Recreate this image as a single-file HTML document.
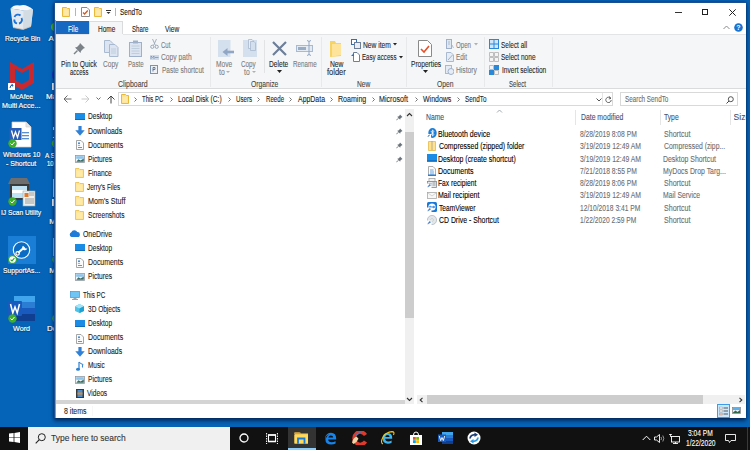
<!DOCTYPE html>
<html><head><meta charset="utf-8"><style>
html,body{margin:0;padding:0}
body{width:750px;height:450px;overflow:hidden;position:relative;background:#0664b8;font-family:"Liberation Sans",sans-serif}
.t{position:absolute;white-space:nowrap;line-height:10px;transform-origin:0 0}
.r{position:absolute}
</style></head><body>
<svg class="r" style="left:8px;top:3px;" width="28" height="29" viewBox="0 0 28 29">
<path d="M2.5 5.5 L15.5 7.5 L25 6.5 L23 23.5 L15 26.5 L5 24.5 Z" fill="#e4eaf0"/>
<path d="M15.5 7.5 L25 6.5 L23 23.5 L15 26.5 Z" fill="#d3dbe3"/>
<path d="M2.5 5.5 Q6 1 12 2.5 Q18 0.5 25 6.5 L15.5 7.5 Z" fill="#f6f8fa"/>
<path d="M5 24.5 L15 26.5 L23 23.5" stroke="#c9b9a8" stroke-width="0.8" fill="none"/>
<path d="M6.5 14 A3.8 3.8 0 0 1 12.5 12.5" stroke="#1d72d8" stroke-width="1.8" fill="none"/>
<path d="M13.5 15 A3.8 3.8 0 0 1 11 20.5" stroke="#1d72d8" stroke-width="1.8" fill="none"/>
<path d="M9 20.5 A3.8 3.8 0 0 1 6.3 16.5" stroke="#1d72d8" stroke-width="1.8" fill="none"/>
</svg>
<div class="t" style="left:4.65px;top:34px;font-size:8px;color:#ffffff;transform:scaleX(0.836);text-shadow:0 0 1.5px rgba(0,0,0,.45),0 1px 1px rgba(0,0,0,.35);-webkit-text-stroke:0.2px #ffffff;">Recycle Bin</div>
<svg class="r" style="left:51px;top:23px;" width="4" height="8" viewBox="0 0 4 8"><circle cx="4" cy="4" r="4" fill="#3fae2a"/></svg>
<div class="t" style="left:48.56px;top:34px;font-size:8px;color:#ffffff;text-shadow:0 0 1.5px rgba(0,0,0,.45),0 1px 1px rgba(0,0,0,.35);-webkit-text-stroke:0.2px #ffffff;">Ar</div>
<svg class="r" style="left:9px;top:61px;" width="26" height="30" viewBox="0 0 26 30">
<path d="M1 1 L13 8 L25 1 L25 22 L13 29 L1 22 Z" fill="#c8282e"/>
<path d="M6 8 L13 12 L20 8 L20 19 L13 23 L6 19 Z" fill="#0664b8"/>
</svg>
<svg class="r" style="left:8px;top:83px;" width="7" height="7" viewBox="0 0 7 7"><rect width="7" height="7" fill="#fff"/><path d="M2 5 Q2 2 5 2 M3.5 1.5 L5 2 L4.5 3.5" stroke="#1a5fb4" fill="none" stroke-width="1"/></svg>
<div class="t" style="left:9.57px;top:92px;font-size:8px;color:#ffffff;transform:scaleX(0.853);text-shadow:0 0 1.5px rgba(0,0,0,.45),0 1px 1px rgba(0,0,0,.35);-webkit-text-stroke:0.2px #ffffff;">McAfee</div>
<div class="t" style="left:2.10px;top:101px;font-size:8px;color:#ffffff;transform:scaleX(0.890);text-shadow:0 0 1.5px rgba(0,0,0,.45),0 1px 1px rgba(0,0,0,.35);-webkit-text-stroke:0.2px #ffffff;">Multi Acce...</div>
<svg class="r" style="left:51px;top:66px;" width="4" height="18" viewBox="0 0 4 18"><circle cx="10" cy="9" r="9" fill="#1c34c4"/></svg>
<svg class="r" style="left:52px;top:83px;" width="3" height="7" viewBox="0 0 3 7"><rect width="3" height="7" fill="#fff"/></svg>
<div class="t" style="left:46.00px;top:92px;font-size:8px;color:#ffffff;text-shadow:0 0 1.5px rgba(0,0,0,.45),0 1px 1px rgba(0,0,0,.35);-webkit-text-stroke:0.2px #ffffff;">Ma</div>
<svg class="r" style="left:9px;top:121px;" width="24" height="28" viewBox="0 0 24 28">
<path d="M3 1 L17 1 L22 6 L22 26 L3 26 Z" fill="#fff" stroke="#d0d0d0" stroke-width="0.7"/>
<path d="M17 1 L17 6 L22 6" fill="#e6e6e6" stroke="#d0d0d0" stroke-width="0.7"/>
<rect x="13" y="11" width="7" height="1.3" fill="#5a8fd0"/><rect x="13" y="14" width="7" height="1.3" fill="#5a8fd0"/><rect x="13" y="17" width="7" height="1.3" fill="#5a8fd0"/>
<rect x="0.5" y="7" width="12" height="12" fill="#2b5fb8"/>
<path d="M2.5 9.5 L4.5 16.5 L6.5 11 L8.5 16.5 L10.5 9.5" stroke="#fff" stroke-width="1.3" fill="none"/>
</svg>
<svg class="r" style="left:8px;top:139px;" width="9" height="9" viewBox="0 0 9 9"><circle cx="4.5" cy="4.5" r="4.2" fill="#3fae2a"/><path d="M2.5 4.5 L4 6 L6.5 3" stroke="#fff" stroke-width="1" fill="none"/></svg>
<div class="t" style="left:2.97px;top:150px;font-size:8px;color:#ffffff;transform:scaleX(0.856);text-shadow:0 0 1.5px rgba(0,0,0,.45),0 1px 1px rgba(0,0,0,.35);-webkit-text-stroke:0.2px #ffffff;">Windows 10</div>
<div class="t" style="left:6.23px;top:159px;font-size:8px;color:#ffffff;transform:scaleX(0.874);text-shadow:0 0 1.5px rgba(0,0,0,.45),0 1px 1px rgba(0,0,0,.35);-webkit-text-stroke:0.2px #ffffff;">- Shortcut</div>
<svg class="r" style="left:53px;top:127px;" width="2" height="11" viewBox="0 0 2 11"><rect width="2" height="11" fill="#f4f4f4"/><rect x="0" y="3" width="2" height="7" fill="#2b5fb8"/></svg>
<svg class="r" style="left:51px;top:139px;" width="5" height="9" viewBox="0 0 5 9"><circle cx="5" cy="4.5" r="4.2" fill="#3fae2a"/></svg>
<div class="t" style="left:44.99px;top:151px;font-size:8px;color:#ffffff;transform:scaleX(0.799);text-shadow:0 0 1.5px rgba(0,0,0,.45),0 1px 1px rgba(0,0,0,.35);-webkit-text-stroke:0.2px #ffffff;">A S</div>
<div class="t" style="left:47.07px;top:159px;font-size:8px;color:#ffffff;transform:scaleX(0.743);text-shadow:0 0 1.5px rgba(0,0,0,.45),0 1px 1px rgba(0,0,0,.35);-webkit-text-stroke:0.2px #ffffff;">10</div>
<svg class="r" style="left:7px;top:178px;" width="30" height="30" viewBox="0 0 30 30">
<path d="M1 6 L4 0 L20 0 L23 6 Z" fill="#6e6e6e"/>
<rect x="3" y="6" width="19" height="16" fill="#3a3a3a"/>
<rect x="5" y="8" width="15" height="12" fill="#bfe3f5"/>
<rect x="5" y="12" width="15" height="3" fill="#ffffff"/>
<rect x="16" y="13" width="12" height="15" fill="#eef0f0" stroke="#9aa" stroke-width="0.6"/>
<rect x="17.5" y="15" width="4" height="4" fill="#e07a2a"/>
<path d="M22 15 h5 M22 17 h5 M18 21 h9 M18 23 h9 M18 25 h9" stroke="#888" stroke-width="0.8"/>
</svg>
<svg class="r" style="left:8px;top:197px;" width="9" height="9" viewBox="0 0 9 9"><circle cx="4.5" cy="4.5" r="4.2" fill="#3fae2a"/><path d="M2.5 4.5 L4 6 L6.5 3" stroke="#fff" stroke-width="1" fill="none"/></svg>
<div class="t" style="left:1.22px;top:208px;font-size:8px;color:#ffffff;transform:scaleX(0.829);text-shadow:0 0 1.5px rgba(0,0,0,.45),0 1px 1px rgba(0,0,0,.35);-webkit-text-stroke:0.2px #ffffff;">IJ Scan Utility</div>
<svg class="r" style="left:52px;top:199px;" width="3" height="7" viewBox="0 0 3 7"><rect width="3" height="7" fill="#fff"/></svg>
<svg class="r" style="left:53px;top:179px;" width="2" height="18" viewBox="0 0 2 18"><rect width="2" height="18" fill="#f2efe6"/></svg>
<div class="t" style="left:49.34px;top:217px;font-size:8px;color:#ffffff;text-shadow:0 0 1.5px rgba(0,0,0,.45),0 1px 1px rgba(0,0,0,.35);-webkit-text-stroke:0.2px #ffffff;">M</div>
<div class="r" style="left:8px;top:236px;width:28px;height:28px;background:#1a7dd6;"></div>
<svg class="r" style="left:12px;top:240px;" width="19" height="20" viewBox="0 0 19 20">
<circle cx="9.5" cy="10" r="8.2" fill="#0a6cc4" stroke="#fff" stroke-width="1.1"/>
<path d="M6.2 12.8 L12.2 7.4" stroke="#fff" stroke-width="2"/>
<circle cx="5.6" cy="13.4" r="1.7" fill="none" stroke="#fff" stroke-width="1.2"/>
<path d="M11 5.8 A2.6 2.6 0 1 0 15.3 8.4 L13.6 8.6 L12.6 7.2 Z" fill="#fff"/>
</svg>
<svg class="r" style="left:8px;top:255px;" width="9" height="9" viewBox="0 0 9 9"><circle cx="4.5" cy="4.5" r="3.9" fill="#fff" stroke="#2aa12a" stroke-width="1.1"/><path d="M2.6 4.6 L4 5.9 L6.4 3.2" stroke="#2aa12a" stroke-width="1.1" fill="none"/></svg>
<div class="t" style="left:2.69px;top:266px;font-size:8px;color:#ffffff;transform:scaleX(0.843);text-shadow:0 0 1.5px rgba(0,0,0,.45),0 1px 1px rgba(0,0,0,.35);-webkit-text-stroke:0.2px #ffffff;">SupportAs...</div>
<svg class="r" style="left:53px;top:238px;" width="2" height="18" viewBox="0 0 2 18"><rect width="2" height="18" fill="#c8c8c8"/></svg>
<svg class="r" style="left:52px;top:255px;" width="3" height="9" viewBox="0 0 3 9"><circle cx="4.5" cy="4.5" r="4.2" fill="#3fae2a"/></svg>
<div class="t" style="left:49.34px;top:266px;font-size:8px;color:#ffffff;text-shadow:0 0 1.5px rgba(0,0,0,.45),0 1px 1px rgba(0,0,0,.35);-webkit-text-stroke:0.2px #ffffff;">M</div>
<svg class="r" style="left:8px;top:296px;" width="28" height="26" viewBox="0 0 28 26">
<rect x="6" y="0" width="21" height="6" fill="#41a5ee"/>
<rect x="6" y="6" width="21" height="6" fill="#2b7cd3"/>
<rect x="6" y="12" width="21" height="6" fill="#185abd"/>
<rect x="6" y="18" width="21" height="7" fill="#103f91"/>
<rect x="0" y="5" width="14" height="15" rx="1" fill="#185abd"/>
<path d="M2.5 8 L4.8 17 L7 11 L9.2 17 L11.5 8" stroke="#fff" stroke-width="1.5" fill="none"/>
</svg>
<svg class="r" style="left:8px;top:314px;" width="9" height="9" viewBox="0 0 9 9"><circle cx="4.5" cy="4.5" r="4.2" fill="#3fae2a"/><path d="M2.5 4.5 L4 6 L6.5 3" stroke="#fff" stroke-width="1" fill="none"/></svg>
<div class="t" style="left:13.31px;top:324px;font-size:8px;color:#ffffff;transform:scaleX(0.899);text-shadow:0 0 1.5px rgba(0,0,0,.45),0 1px 1px rgba(0,0,0,.35);-webkit-text-stroke:0.2px #ffffff;">Word</div>
<svg class="r" style="left:52px;top:314px;" width="3" height="9" viewBox="0 0 3 9"><circle cx="4.5" cy="4.5" r="4.2" fill="#3fae2a"/></svg>
<div class="t" style="left:47.00px;top:324px;font-size:8px;color:#ffffff;text-shadow:0 0 1.5px rgba(0,0,0,.45),0 1px 1px rgba(0,0,0,.35);-webkit-text-stroke:0.2px #ffffff;">Do</div>
<div class="r" style="left:54px;top:2px;width:692px;height:416px;background:#1b4f8f;box-shadow:0 3px 4px rgba(0,10,40,.55),0 0 3px rgba(0,10,40,.45)"></div>
<div class="r" style="left:55px;top:3px;width:691px;height:415px;background:#ffffff;"></div>
<svg class="r" style="left:62px;top:7px;" width="8" height="10" viewBox="0 0 8 10"><path d="M0.5 0.5 H4.5 L5.5 1.5 H7.5 V9.5 H0.5 Z" fill="#ffe18f" stroke="#e9b93a" stroke-width="1"/><rect x="1.5" y="2.5" width="5" height="6" fill="#ffe9a8"/></svg>
<div class="r" style="left:75px;top:8px;width:1px;height:8px;background:#b5b5b5;"></div>
<svg class="r" style="left:81px;top:7px;" width="9" height="10" viewBox="0 0 9 10"><path d="M0.5 0.5 H6 L8.5 3 V9.5 H0.5 Z" fill="#fff" stroke="#8a8a8a" stroke-width="1"/><path d="M2 5.5 L3.6 7 L6.8 3.5" stroke="#e2531c" stroke-width="1.3" fill="none"/></svg>
<svg class="r" style="left:94px;top:7px;" width="8" height="10" viewBox="0 0 8 10"><path d="M0.5 0.5 H4.5 L5.5 1.5 H7.5 V9.5 H0.5 Z" fill="#ffe18f" stroke="#e9b93a" stroke-width="1"/><rect x="1.5" y="2.5" width="5" height="6" fill="#ffe9a8"/></svg>
<svg class="r" style="left:106px;top:10px;" width="5" height="5" viewBox="0 0 5 5"><rect x="0" y="0" width="5" height="1" fill="#333"/><path d="M0.5 2 H4.5 L2.5 4 Z" fill="#333"/></svg>
<div class="r" style="left:115px;top:8px;width:1px;height:8px;background:#b5b5b5;"></div>
<div class="t" style="left:119.71px;top:7px;font-size:8.5px;color:#111;transform:scaleX(0.760);-webkit-text-stroke:0.1px #111;">SendTo</div>
<div class="r" style="left:675px;top:12px;width:7px;height:1px;background:#333;"></div>
<div class="r" style="left:702px;top:9px;width:6px;height:6px;background:transparent;border:1px solid #222;box-sizing:border-box"></div>
<svg class="r" style="left:729px;top:9px;" width="7" height="7" viewBox="0 0 7 7"><path d="M0.3 0.3 L6.7 6.7 M6.7 0.3 L0.3 6.7" stroke="#222" stroke-width="1"/></svg>
<div class="r" style="left:56px;top:21px;width:33px;height:13px;background:#1668c0;"></div>
<div class="t" style="left:67.95px;top:24px;font-size:8.5px;color:#fff;transform:scaleX(0.741);-webkit-text-stroke:0.1px #fff;">File</div>
<div class="r" style="left:89px;top:21px;width:34px;height:14px;background:#f5f6f7;border:1px solid #dadbdc;border-bottom:none;box-sizing:border-box"></div>
<div class="t" style="left:97.75px;top:24px;font-size:8.5px;color:#222;transform:scaleX(0.762);-webkit-text-stroke:0.1px #222;">Home</div>
<div class="t" style="left:131.61px;top:24px;font-size:8.5px;color:#222;transform:scaleX(0.723);-webkit-text-stroke:0.1px #222;">Share</div>
<div class="t" style="left:165.47px;top:24px;font-size:8.5px;color:#222;transform:scaleX(0.774);-webkit-text-stroke:0.1px #222;">View</div>
<svg class="r" style="left:723px;top:25px;" width="7" height="5" viewBox="0 0 7 5"><path d="M0.5 4 L3.5 1 L6.5 4" stroke="#8a8a8a" fill="none" stroke-width="1"/></svg>
<svg class="r" style="left:734px;top:23px;" width="9" height="9" viewBox="0 0 9 9"><circle cx="4.5" cy="4.5" r="4.3" fill="#1a73d0"/><text x="4.5" y="7.4" font-size="7" font-weight="bold" text-anchor="middle" fill="#fff" font-family="Liberation Sans">?</text></svg>
<div class="r" style="left:55px;top:34px;width:691px;height:55px;background:#f5f6f7;"></div>
<div class="r" style="left:55px;top:34px;width:34px;height:1px;background:#e3e4e5;"></div>
<div class="r" style="left:123px;top:34px;width:623px;height:1px;background:#e3e4e5;"></div>
<div class="r" style="left:55px;top:88px;width:691px;height:1px;background:#dadbdc;"></div>
<div class="r" style="left:210px;top:37px;width:1px;height:50px;background:#e8e9ea;"></div>
<div class="r" style="left:321px;top:37px;width:1px;height:50px;background:#e8e9ea;"></div>
<div class="r" style="left:406px;top:37px;width:1px;height:50px;background:#e8e9ea;"></div>
<div class="r" style="left:484px;top:37px;width:1px;height:50px;background:#e8e9ea;"></div>
<div class="r" style="left:552px;top:37px;width:1px;height:50px;background:#e8e9ea;"></div>
<svg class="r" style="left:73px;top:42px;" width="13" height="13" viewBox="0 0 13 13"><path d="M7 1 L12 6 L10.5 6.5 L8 9 L7.5 11 L2 5.5 L4 5 L6.5 2.5 Z" fill="#7b8288"/><path d="M4.5 8.5 L1 12" stroke="#7b8288" stroke-width="1.4"/></svg>
<div class="t" style="left:61.14px;top:59px;font-size:8.5px;color:#262626;transform:scaleX(0.782);-webkit-text-stroke:0.1px #262626;">Pin to Quick</div>
<div class="t" style="left:69.86px;top:67px;font-size:8.5px;color:#262626;transform:scaleX(0.694);-webkit-text-stroke:0.1px #262626;">access</div>
<svg class="r" style="left:104px;top:40px;" width="15" height="17" viewBox="0 0 15 17"><path d="M0.5 0.5 H6 L9 3.5 V12.5 H0.5 Z" fill="#dbe4f0" stroke="#a9b9cf"/><path d="M5.5 4.5 H11 L14 7.5 V16.5 H5.5 Z" fill="#dbe4f0" stroke="#a9b9cf"/><path d="M7 9 H12 M7 11 H12 M7 13 H12" stroke="#b8c6d8" stroke-width="0.8"/></svg>
<div class="t" style="left:102.66px;top:59px;font-size:8.5px;color:#7c7c7c;transform:scaleX(0.773);-webkit-text-stroke:0.1px #7c7c7c;">Copy</div>
<svg class="r" style="left:129px;top:40px;" width="13" height="17" viewBox="0 0 13 17"><rect x="0.5" y="2.5" width="12" height="14" fill="#dbe4f0" stroke="#9fb1ca"/><rect x="4" y="0.5" width="5" height="3" fill="#9fb1ca"/><path d="M2.5 6 H10.5 M2.5 8.5 H10.5 M2.5 11 H10.5 M2.5 13.5 H10.5" stroke="#b8c6d8" stroke-width="0.8"/></svg>
<div class="t" style="left:127.59px;top:59px;font-size:8.5px;color:#7c7c7c;transform:scaleX(0.719);-webkit-text-stroke:0.1px #7c7c7c;">Paste</div>
<svg class="r" style="left:150px;top:39px;" width="9" height="10" viewBox="0 0 9 10"><path d="M2.5 0 L5.5 6.5 M6.5 0 L3.5 6.5" stroke="#9aa8b8" stroke-width="0.9"/><circle cx="2.3" cy="7.8" r="1.6" fill="none" stroke="#9aa8b8"/><circle cx="6.7" cy="7.8" r="1.6" fill="none" stroke="#9aa8b8"/></svg>
<div class="t" style="left:161.48px;top:40px;font-size:8.5px;color:#7c7c7c;transform:scaleX(0.705);-webkit-text-stroke:0.1px #7c7c7c;">Cut</div>
<svg class="r" style="left:150px;top:55px;" width="9" height="5" viewBox="0 0 9 5"><rect x="0" y="0" width="9" height="5" fill="#cdd9e8"/><path d="M1 1 V4 M1 1 L2.5 2.5 L4 1 V4 M5 2.5 H8.5" stroke="#7d92ad" stroke-width="0.8" fill="none"/></svg>
<div class="t" style="left:161.19px;top:52px;font-size:8.5px;color:#7c7c7c;transform:scaleX(0.790);-webkit-text-stroke:0.1px #7c7c7c;">Copy path</div>
<svg class="r" style="left:150px;top:65px;" width="8" height="9" viewBox="0 0 8 9"><rect x="0.5" y="0.5" width="7" height="8" fill="#eef2f7" stroke="#7d92ad"/><path d="M3 6.5 V2.5 H5 V4.5 H3" stroke="#4a6388" stroke-width="0.8" fill="none"/></svg>
<div class="t" style="left:161.69px;top:65px;font-size:8.5px;color:#7c7c7c;transform:scaleX(0.770);-webkit-text-stroke:0.1px #7c7c7c;">Paste shortcut</div>
<div class="t" style="left:117.72px;top:79px;font-size:8.5px;color:#444;transform:scaleX(0.817);-webkit-text-stroke:0.1px #444;">Clipboard</div>
<svg class="r" style="left:218px;top:40px;" width="17" height="17" viewBox="0 0 17 17"><rect x="0" y="0" width="12.5" height="17" fill="#d5e0ee"/><path d="M16 12 H9" stroke="#8fa6c4" stroke-width="2.6"/><path d="M4.5 12 L9.5 8 V16 Z" fill="#8fa6c4"/></svg>
<div class="t" style="left:216.04px;top:59px;font-size:8.5px;color:#7c7c7c;transform:scaleX(0.781);-webkit-text-stroke:0.1px #7c7c7c;">Move</div>
<div class="t" style="left:218.89px;top:67px;font-size:8.5px;color:#7c7c7c;transform:scaleX(0.795);-webkit-text-stroke:0.1px #7c7c7c;">to</div>
<svg class="r" style="left:226px;top:71px;" width="4" height="3" viewBox="0 0 4 3"><path d="M0 0 H4 L2 2 Z" fill="#b0b0b0"/></svg>
<svg class="r" style="left:243px;top:39px;" width="15" height="18" viewBox="0 0 15 18"><rect x="0" y="1" width="14" height="17" fill="#d5e0ee"/><path d="M5.5 0.5 H9 L10.5 2 V9.5 H5.5 Z" fill="#e8eef6" stroke="#a9b9cf" stroke-width="0.8"/><path d="M7.5 2.5 H11 L12.5 4 V11.5 H7.5 Z" fill="#d5e0ee" stroke="#a9b9cf" stroke-width="0.8"/></svg>
<div class="t" style="left:241.17px;top:59px;font-size:8.5px;color:#7c7c7c;transform:scaleX(0.739);-webkit-text-stroke:0.1px #7c7c7c;">Copy</div>
<div class="t" style="left:244.39px;top:67px;font-size:8.5px;color:#7c7c7c;transform:scaleX(0.795);-webkit-text-stroke:0.1px #7c7c7c;">to</div>
<svg class="r" style="left:252px;top:71px;" width="4" height="3" viewBox="0 0 4 3"><path d="M0 0 H4 L2 2 Z" fill="#b0b0b0"/></svg>
<div class="r" style="left:264px;top:40px;width:1px;height:33px;background:#e2e3e4;"></div>
<svg class="r" style="left:272px;top:41px;" width="15" height="15" viewBox="0 0 15 15"><path d="M1 1 L14 14 M14 1 L1 14" stroke="#6c7f99" stroke-width="2.2"/></svg>
<div class="t" style="left:269.13px;top:59px;font-size:8.5px;color:#262626;transform:scaleX(0.780);-webkit-text-stroke:0.1px #262626;">Delete</div>
<svg class="r" style="left:277px;top:70px;" width="5" height="3" viewBox="0 0 5 3"><path d="M0 0 H5 L2.5 3 Z" fill="#222"/></svg>
<svg class="r" style="left:296px;top:40px;" width="18" height="16" viewBox="0 0 18 16"><rect x="0.5" y="5.5" width="16" height="6" fill="#e4eaf2" stroke="#a9b9cf"/><rect x="2" y="7" width="8" height="3" fill="#98acc6"/><path d="M11 0.6 Q13 0.6 13 2 V14 Q13 15.4 11 15.4 M15 0.6 Q13 0.6 13 2 M13 14 Q13 15.4 15 15.4" stroke="#8fa6c4" stroke-width="1" fill="none"/></svg>
<div class="t" style="left:292.59px;top:59px;font-size:8.5px;color:#7c7c7c;transform:scaleX(0.738);-webkit-text-stroke:0.1px #7c7c7c;">Rename</div>
<div class="t" style="left:251.30px;top:79px;font-size:8.5px;color:#444;transform:scaleX(0.793);-webkit-text-stroke:0.1px #444;">Organize</div>
<svg class="r" style="left:330px;top:41px;" width="12" height="16" viewBox="0 0 12 16"><path d="M0 0 H5 L6 2 H11 V15 L0 16 Z" fill="#f6d365"/><path d="M2 3 H11 V14 L2 15.5 Z" fill="#fde49a"/></svg>
<div class="t" style="left:330.11px;top:59px;font-size:8.5px;color:#262626;transform:scaleX(0.792);-webkit-text-stroke:0.1px #262626;">New</div>
<div class="t" style="left:327.47px;top:67px;font-size:8.5px;color:#262626;transform:scaleX(0.882);-webkit-text-stroke:0.1px #262626;">folder</div>
<svg class="r" style="left:351px;top:39px;" width="10" height="10" viewBox="0 0 10 10"><rect x="0.5" y="0.5" width="5" height="5" fill="#fff" stroke="#2e6fc0"/><rect x="3.5" y="3.5" width="6" height="6" fill="#e8eef6" stroke="#6f7f95"/></svg>
<div class="t" style="left:362.57px;top:40px;font-size:8.5px;color:#262626;transform:scaleX(0.787);-webkit-text-stroke:0.1px #262626;">New item</div>
<svg class="r" style="left:393px;top:43px;" width="4" height="3" viewBox="0 0 4 3"><path d="M0 0 H4 L2 2.5 Z" fill="#222"/></svg>
<svg class="r" style="left:351px;top:52px;" width="9" height="10" viewBox="0 0 9 10"><path d="M2.5 0.5 H6 L8.5 3 V9.5 H2.5 Z" fill="#fff" stroke="#6f7f95"/><path d="M0 4 L3 1 V4 Z" fill="#2e6fc0"/></svg>
<div class="t" style="left:362.06px;top:52px;font-size:8.5px;color:#262626;transform:scaleX(0.723);-webkit-text-stroke:0.1px #262626;">Easy access</div>
<svg class="r" style="left:399px;top:56px;" width="4" height="3" viewBox="0 0 4 3"><path d="M0 0 H4 L2 2.5 Z" fill="#222"/></svg>
<div class="t" style="left:357.13px;top:79px;font-size:8.5px;color:#444;transform:scaleX(0.783);-webkit-text-stroke:0.1px #444;">New</div>
<svg class="r" style="left:418px;top:40px;" width="14" height="17" viewBox="0 0 14 17"><path d="M0.5 0.5 H9.5 L13.5 4.5 V16.5 H0.5 Z" fill="#fff" stroke="#8a8a8a"/><path d="M3 9 L6 12 L11 6" stroke="#e4512a" stroke-width="1.6" fill="none"/></svg>
<div class="t" style="left:410.57px;top:59px;font-size:8.5px;color:#262626;transform:scaleX(0.777);-webkit-text-stroke:0.1px #262626;">Properties</div>
<svg class="r" style="left:423px;top:70px;" width="5" height="3" viewBox="0 0 5 3"><path d="M0 0 H5 L2.5 3 Z" fill="#222"/></svg>
<svg class="r" style="left:446px;top:39px;" width="8" height="10" viewBox="0 0 8 10"><rect x="0.5" y="0.5" width="5" height="9" fill="#dfe7f1" stroke="#9fb1ca"/><path d="M2 3 H4 M2 5 H4 M6 6 L7.5 9" stroke="#9fb1ca" stroke-width="0.8"/></svg>
<div class="t" style="left:455.70px;top:40px;font-size:8.5px;color:#7c7c7c;transform:scaleX(0.723);-webkit-text-stroke:0.1px #7c7c7c;">Open</div>
<svg class="r" style="left:474px;top:43px;" width="4" height="3" viewBox="0 0 4 3"><path d="M0 0 H4 L2 2.5 Z" fill="#b0b0b0"/></svg>
<svg class="r" style="left:446px;top:52px;" width="8" height="10" viewBox="0 0 8 10"><path d="M0.5 0.5 H5 L7.5 3 V9.5 H0.5 Z" fill="#e6ecf5" stroke="#a9b9cf"/><path d="M2 8 L6.5 3" stroke="#9fb1ca" stroke-width="1"/></svg>
<div class="t" style="left:456.13px;top:52px;font-size:8.5px;color:#7c7c7c;transform:scaleX(0.750);-webkit-text-stroke:0.1px #7c7c7c;">Edit</div>
<svg class="r" style="left:445px;top:65px;" width="9" height="10" viewBox="0 0 9 10"><rect x="0.5" y="0.5" width="6" height="8" fill="#e6ecf5" stroke="#a9b9cf"/><circle cx="6" cy="6.5" r="3" fill="#e6ecf5" stroke="#9fb1ca"/></svg>
<div class="t" style="left:456.13px;top:65px;font-size:8.5px;color:#7c7c7c;transform:scaleX(0.792);-webkit-text-stroke:0.1px #7c7c7c;">History</div>
<div class="t" style="left:436.67px;top:79px;font-size:8.5px;color:#444;transform:scaleX(0.794);-webkit-text-stroke:0.1px #444;">Open</div>
<svg class="r" style="left:489px;top:39px;" width="10" height="10" viewBox="0 0 10 10"><rect x="0" y="0" width="10" height="10" fill="#2b88d8"/><path d="M1 1 h3.5 v3.5 h-3.5 z M5.5 1 h3.5 v3.5 h-3.5 z M1 5.5 h3.5 v3.5 h-3.5 z M5.5 5.5 h3.5 v3.5 h-3.5 z" fill="#cfe6fb"/></svg>
<div class="t" style="left:500.96px;top:40px;font-size:8.5px;color:#262626;transform:scaleX(0.758);-webkit-text-stroke:0.1px #262626;">Select all</div>
<svg class="r" style="left:489px;top:52px;" width="10" height="10" viewBox="0 0 10 10"><path d="M0.5 0.5 h4 v4 h-4 z M5.5 0.5 h4 v4 h-4 z M0.5 5.5 h4 v4 h-4 z M5.5 5.5 h4 v4 h-4 z" fill="#f4f4f4" stroke="#b0b0b0" stroke-width="0.8"/></svg>
<div class="t" style="left:500.82px;top:52px;font-size:8.5px;color:#262626;transform:scaleX(0.769);-webkit-text-stroke:0.1px #262626;">Select none</div>
<svg class="r" style="left:489px;top:65px;" width="10" height="10" viewBox="0 0 10 10"><path d="M0.5 0.5 h4 v4 h-4 z M5.5 5.5 h4 v4 h-4 z" fill="#f4f4f4" stroke="#b0b0b0" stroke-width="0.8"/><rect x="5" y="0" width="5" height="5" fill="#2b88d8"/><rect x="0" y="5" width="5" height="5" fill="#2b88d8"/></svg>
<div class="t" style="left:501.57px;top:65px;font-size:8.5px;color:#262626;transform:scaleX(0.774);-webkit-text-stroke:0.1px #262626;">Invert selection</div>
<div class="t" style="left:509.08px;top:79px;font-size:8.5px;color:#444;transform:scaleX(0.721);-webkit-text-stroke:0.1px #444;">Select</div>
<svg class="r" style="left:63px;top:95px;" width="9" height="8" viewBox="0 0 9 8"><path d="M8.5 4 H1 M4.5 0.5 L1 4 L4.5 7.5" stroke="#6b6b6b" stroke-width="1" fill="none"/></svg>
<svg class="r" style="left:81px;top:95px;" width="9" height="8" viewBox="0 0 9 8"><path d="M0.5 4 H8 M4.5 0.5 L8 4 L4.5 7.5" stroke="#c9c9c9" stroke-width="1" fill="none"/></svg>
<svg class="r" style="left:96px;top:97px;" width="5" height="4" viewBox="0 0 5 4"><path d="M0.5 0.5 L2.5 2.5 L4.5 0.5" stroke="#6b6b6b" stroke-width="1" fill="none"/></svg>
<svg class="r" style="left:107px;top:95px;" width="8" height="9" viewBox="0 0 8 9"><path d="M4 8.5 V1 M0.5 4.5 L4 1 L7.5 4.5" stroke="#444" stroke-width="1" fill="none"/></svg>
<div class="r" style="left:118px;top:92px;width:495px;height:14px;background:#fff;border:1px solid #d9d9d9;box-sizing:border-box"></div>
<svg class="r" style="left:121px;top:94px;" width="8" height="10" viewBox="0 0 8 10"><path d="M0.5 0.5 H4.5 L5.5 1.5 H7.5 V9.5 H0.5 Z" fill="#ffe18f" stroke="#e9b93a" stroke-width="1"/><rect x="1.5" y="2.5" width="5" height="6" fill="#ffe9a8"/></svg>
<div class="r" style="left:602px;top:93px;width:1px;height:12px;background:#e5e5e5;"></div>
<svg class="r" style="left:596px;top:98px;" width="6" height="4" viewBox="0 0 6 4"><path d="M0.5 0.5 L3 3 L5.5 0.5" stroke="#555" stroke-width="1" fill="none"/></svg>
<svg class="r" style="left:605px;top:96px;" width="7" height="7" viewBox="0 0 7 7"><path d="M5.6 2.2 A2.7 2.7 0 1 0 6.2 4" stroke="#555" stroke-width="0.9" fill="none"/><path d="M4 0.5 L6 2.3 L3.8 3" stroke="#555" stroke-width="0.9" fill="none"/></svg>
<svg class="r" style="left:134px;top:97px;" width="3" height="5" viewBox="0 0 3 5"><path d="M0.5 0.5 L2.5 2.5 L0.5 4.5" stroke="#666" stroke-width="0.9" fill="none"/></svg>
<svg class="r" style="left:170px;top:97px;" width="3" height="5" viewBox="0 0 3 5"><path d="M0.5 0.5 L2.5 2.5 L0.5 4.5" stroke="#666" stroke-width="0.9" fill="none"/></svg>
<svg class="r" style="left:228px;top:97px;" width="3" height="5" viewBox="0 0 3 5"><path d="M0.5 0.5 L2.5 2.5 L0.5 4.5" stroke="#666" stroke-width="0.9" fill="none"/></svg>
<svg class="r" style="left:257px;top:97px;" width="3" height="5" viewBox="0 0 3 5"><path d="M0.5 0.5 L2.5 2.5 L0.5 4.5" stroke="#666" stroke-width="0.9" fill="none"/></svg>
<svg class="r" style="left:289px;top:97px;" width="3" height="5" viewBox="0 0 3 5"><path d="M0.5 0.5 L2.5 2.5 L0.5 4.5" stroke="#666" stroke-width="0.9" fill="none"/></svg>
<svg class="r" style="left:330px;top:97px;" width="3" height="5" viewBox="0 0 3 5"><path d="M0.5 0.5 L2.5 2.5 L0.5 4.5" stroke="#666" stroke-width="0.9" fill="none"/></svg>
<svg class="r" style="left:372px;top:97px;" width="3" height="5" viewBox="0 0 3 5"><path d="M0.5 0.5 L2.5 2.5 L0.5 4.5" stroke="#666" stroke-width="0.9" fill="none"/></svg>
<svg class="r" style="left:415px;top:97px;" width="3" height="5" viewBox="0 0 3 5"><path d="M0.5 0.5 L2.5 2.5 L0.5 4.5" stroke="#666" stroke-width="0.9" fill="none"/></svg>
<svg class="r" style="left:457px;top:97px;" width="3" height="5" viewBox="0 0 3 5"><path d="M0.5 0.5 L2.5 2.5 L0.5 4.5" stroke="#666" stroke-width="0.9" fill="none"/></svg>
<div class="t" style="left:142.48px;top:94px;font-size:8.5px;color:#1e1e1e;transform:scaleX(0.703);-webkit-text-stroke:0.1px #1e1e1e;">This PC</div>
<div class="t" style="left:178.14px;top:94px;font-size:8.5px;color:#1e1e1e;transform:scaleX(0.783);-webkit-text-stroke:0.1px #1e1e1e;">Local Disk (C:)</div>
<div class="t" style="left:235.70px;top:94px;font-size:8.5px;color:#1e1e1e;transform:scaleX(0.723);-webkit-text-stroke:0.1px #1e1e1e;">Users</div>
<div class="t" style="left:265.68px;top:94px;font-size:8.5px;color:#1e1e1e;transform:scaleX(0.723);-webkit-text-stroke:0.1px #1e1e1e;">Reede</div>
<div class="t" style="left:297.61px;top:94px;font-size:8.5px;color:#1e1e1e;transform:scaleX(0.816);-webkit-text-stroke:0.1px #1e1e1e;">AppData</div>
<div class="t" style="left:337.52px;top:94px;font-size:8.5px;color:#1e1e1e;transform:scaleX(0.832);-webkit-text-stroke:0.1px #1e1e1e;">Roaming</div>
<div class="t" style="left:379.44px;top:94px;font-size:8.5px;color:#1e1e1e;transform:scaleX(0.840);-webkit-text-stroke:0.1px #1e1e1e;">Microsoft</div>
<div class="t" style="left:422.97px;top:94px;font-size:8.5px;color:#1e1e1e;transform:scaleX(0.820);-webkit-text-stroke:0.1px #1e1e1e;">Windows</div>
<div class="t" style="left:465.21px;top:94px;font-size:8.5px;color:#1e1e1e;transform:scaleX(0.745);-webkit-text-stroke:0.1px #1e1e1e;">SendTo</div>
<div class="r" style="left:620px;top:92px;width:118px;height:14px;background:#fff;border:1px solid #d9d9d9;box-sizing:border-box"></div>
<div class="t" style="left:625.29px;top:94px;font-size:8.5px;color:#6d6d6d;transform:scaleX(0.746);-webkit-text-stroke:0.1px #6d6d6d;">Search SendTo</div>
<svg class="r" style="left:726px;top:96px;" width="8" height="8" viewBox="0 0 8 8"><circle cx="4.8" cy="3.2" r="2.5" fill="none" stroke="#444" stroke-width="0.9"/><path d="M3 5 L0.5 7.5" stroke="#444" stroke-width="1"/></svg>
<svg class="r" style="left:75px;top:113px;" width="10" height="7" viewBox="0 0 10 7"><rect x="0" y="0" width="10" height="6.5" fill="#1a8ce6"/><rect x="0" y="6" width="10" height="1" fill="#0f6cbd"/></svg>
<div class="t" style="left:87.56px;top:111px;font-size:8.5px;color:#1a1a1a;transform:scaleX(0.773);-webkit-text-stroke:0.1px #1a1a1a;">Desktop</div>
<svg class="r" style="left:75px;top:126px;" width="10" height="10" viewBox="0 0 10 10"><rect x="3.4" y="0" width="3.2" height="5" fill="#2f80d6"/><path d="M0.3 4.3 H9.7 L5 9.8 Z" fill="#2f80d6"/></svg>
<div class="t" style="left:87.54px;top:126px;font-size:8.5px;color:#1a1a1a;transform:scaleX(0.811);-webkit-text-stroke:0.1px #1a1a1a;">Downloads</div>
<svg class="r" style="left:76px;top:140px;" width="8" height="10" viewBox="0 0 8 10"><path d="M0.5 0.5 H5 L7.5 3 V9.5 H0.5 Z" fill="#fbfbfb" stroke="#8f8f8f" stroke-width="0.8"/><circle cx="3" cy="3.3" r="1" fill="#2f86d8"/><path d="M1.6 6 Q3 4.4 4.4 6 Z" fill="#2f86d8"/><path d="M2 7.5 H6" stroke="#3aa85a" stroke-width="0.9"/></svg>
<div class="t" style="left:87.54px;top:140px;font-size:8.5px;color:#1a1a1a;transform:scaleX(0.817);-webkit-text-stroke:0.1px #1a1a1a;">Documents</div>
<svg class="r" style="left:75px;top:155px;" width="10" height="8" viewBox="0 0 10 8"><rect x="0.5" y="0.5" width="9" height="7" fill="#f2f4f6" stroke="#8f9aa5" stroke-width="0.8"/><rect x="1.2" y="1.2" width="7.6" height="2.6" fill="#8cc4ec"/><path d="M1.2 6.8 L3.5 4.2 L5.5 5.6 L8.8 3.6 V6.8 Z" fill="#3b6f63"/></svg>
<div class="t" style="left:87.56px;top:154px;font-size:8.5px;color:#1a1a1a;transform:scaleX(0.785);-webkit-text-stroke:0.1px #1a1a1a;">Pictures</div>
<svg class="r" style="left:75px;top:168px;" width="9" height="10" viewBox="0 0 9 10"><path d="M0.5 0.5 H4 L5 1.5 H8.5 V9.5 H0.5 Z" fill="#ffe28f" stroke="#e8bd4a" stroke-width="0.8"/><rect x="1.5" y="2.5" width="6" height="6" fill="#ffeaa8"/></svg>
<div class="t" style="left:87.56px;top:168px;font-size:8.5px;color:#1a1a1a;transform:scaleX(0.786);-webkit-text-stroke:0.1px #1a1a1a;">Finance</div>
<svg class="r" style="left:75px;top:182px;" width="9" height="10" viewBox="0 0 9 10"><path d="M0.5 0.5 H4 L5 1.5 H8.5 V9.5 H0.5 Z" fill="#ffe28f" stroke="#e8bd4a" stroke-width="0.8"/><rect x="1.5" y="2.5" width="6" height="6" fill="#ffeaa8"/></svg>
<div class="t" style="left:87.32px;top:182px;font-size:8.5px;color:#1a1a1a;transform:scaleX(0.736);-webkit-text-stroke:0.1px #1a1a1a;">Jerry's Files</div>
<svg class="r" style="left:75px;top:196px;" width="9" height="10" viewBox="0 0 9 10"><path d="M0.5 0.5 H4 L5 1.5 H8.5 V9.5 H0.5 Z" fill="#ffe28f" stroke="#e8bd4a" stroke-width="0.8"/><rect x="1.5" y="2.5" width="6" height="6" fill="#ffeaa8"/></svg>
<div class="t" style="left:87.53px;top:196px;font-size:8.5px;color:#1a1a1a;transform:scaleX(0.842);-webkit-text-stroke:0.1px #1a1a1a;">Mom's Stuff</div>
<svg class="r" style="left:75px;top:210px;" width="9" height="10" viewBox="0 0 9 10"><path d="M0.5 0.5 H4 L5 1.5 H8.5 V9.5 H0.5 Z" fill="#ffe28f" stroke="#e8bd4a" stroke-width="0.8"/><rect x="1.5" y="2.5" width="6" height="6" fill="#ffeaa8"/></svg>
<div class="t" style="left:87.82px;top:210px;font-size:8.5px;color:#1a1a1a;transform:scaleX(0.772);-webkit-text-stroke:0.1px #1a1a1a;">Screenshots</div>
<svg class="r" style="left:396px;top:114px;" width="7" height="7" viewBox="0 0 7 7"><path d="M4 0.5 L6.5 3 L5.6 3.4 L4.4 4.6 L4.2 5.8 L1.2 2.8 L2.4 2.6 L3.6 1.4 Z" fill="#6b737b"/><path d="M2.4 4.2 L0.3 6.3" stroke="#6b737b" stroke-width="0.9"/></svg>
<svg class="r" style="left:396px;top:128px;" width="7" height="7" viewBox="0 0 7 7"><path d="M4 0.5 L6.5 3 L5.6 3.4 L4.4 4.6 L4.2 5.8 L1.2 2.8 L2.4 2.6 L3.6 1.4 Z" fill="#6b737b"/><path d="M2.4 4.2 L0.3 6.3" stroke="#6b737b" stroke-width="0.9"/></svg>
<svg class="r" style="left:396px;top:142px;" width="7" height="7" viewBox="0 0 7 7"><path d="M4 0.5 L6.5 3 L5.6 3.4 L4.4 4.6 L4.2 5.8 L1.2 2.8 L2.4 2.6 L3.6 1.4 Z" fill="#6b737b"/><path d="M2.4 4.2 L0.3 6.3" stroke="#6b737b" stroke-width="0.9"/></svg>
<svg class="r" style="left:396px;top:156px;" width="7" height="7" viewBox="0 0 7 7"><path d="M4 0.5 L6.5 3 L5.6 3.4 L4.4 4.6 L4.2 5.8 L1.2 2.8 L2.4 2.6 L3.6 1.4 Z" fill="#6b737b"/><path d="M2.4 4.2 L0.3 6.3" stroke="#6b737b" stroke-width="0.9"/></svg>
<svg class="r" style="left:69px;top:230px;" width="11" height="7" viewBox="0 0 11 7"><path d="M2.5 7 A2.5 2.5 0 0 1 2.3 2.3 A3.3 3.3 0 0 1 8.3 2 A2.5 2.5 0 0 1 8.5 7 Z" fill="#1e7bd8"/></svg>
<div class="t" style="left:82.75px;top:229px;font-size:8.5px;color:#1a1a1a;transform:scaleX(0.810);-webkit-text-stroke:0.1px #1a1a1a;">OneDrive</div>
<svg class="r" style="left:75px;top:244px;" width="10" height="7" viewBox="0 0 10 7"><rect x="0" y="0" width="10" height="6.5" fill="#1a8ce6"/><rect x="0" y="6" width="10" height="1" fill="#0f6cbd"/></svg>
<div class="t" style="left:87.56px;top:243px;font-size:8.5px;color:#1a1a1a;transform:scaleX(0.773);-webkit-text-stroke:0.1px #1a1a1a;">Desktop</div>
<svg class="r" style="left:76px;top:258px;" width="8" height="10" viewBox="0 0 8 10"><path d="M0.5 0.5 H5 L7.5 3 V9.5 H0.5 Z" fill="#fbfbfb" stroke="#8f8f8f" stroke-width="0.8"/><circle cx="3" cy="3.3" r="1" fill="#2f86d8"/><path d="M1.6 6 Q3 4.4 4.4 6 Z" fill="#2f86d8"/><path d="M2 7.5 H6" stroke="#3aa85a" stroke-width="0.9"/></svg>
<div class="t" style="left:87.54px;top:257px;font-size:8.5px;color:#1a1a1a;transform:scaleX(0.817);-webkit-text-stroke:0.1px #1a1a1a;">Documents</div>
<svg class="r" style="left:75px;top:273px;" width="10" height="8" viewBox="0 0 10 8"><rect x="0.5" y="0.5" width="9" height="7" fill="#f2f4f6" stroke="#8f9aa5" stroke-width="0.8"/><rect x="1.2" y="1.2" width="7.6" height="2.6" fill="#8cc4ec"/><path d="M1.2 6.8 L3.5 4.2 L5.5 5.6 L8.8 3.6 V6.8 Z" fill="#3b6f63"/></svg>
<div class="t" style="left:87.56px;top:271px;font-size:8.5px;color:#1a1a1a;transform:scaleX(0.785);-webkit-text-stroke:0.1px #1a1a1a;">Pictures</div>
<svg class="r" style="left:70px;top:291px;" width="10" height="9" viewBox="0 0 10 9"><rect x="0.5" y="0.5" width="9" height="6" fill="#6fc6f5" stroke="#4c9fd8" stroke-width="0.8"/><rect x="3.5" y="7" width="3" height="1" fill="#9aa5af"/><rect x="2" y="8" width="6" height="1" fill="#9aa5af"/></svg>
<div class="t" style="left:82.94px;top:290px;font-size:8.5px;color:#1a1a1a;transform:scaleX(0.738);-webkit-text-stroke:0.1px #1a1a1a;">This PC</div>
<svg class="r" style="left:75px;top:304px;" width="9" height="9" viewBox="0 0 9 9"><path d="M4.5 0 L9 2.2 V7 L4.5 9 L0 7 V2.2 Z" fill="#4fc3e8"/><path d="M0 2.2 L4.5 4.4 L9 2.2 L4.5 0 Z" fill="#a6e3f6"/><path d="M4.5 4.4 V9 L9 7 V2.2 Z" fill="#1ea2d4"/></svg>
<div class="t" style="left:87.86px;top:304px;font-size:8.5px;color:#1a1a1a;transform:scaleX(0.768);-webkit-text-stroke:0.1px #1a1a1a;">3D Objects</div>
<svg class="r" style="left:75px;top:320px;" width="10" height="7" viewBox="0 0 10 7"><rect x="0" y="0" width="10" height="6.5" fill="#1a8ce6"/><rect x="0" y="6" width="10" height="1" fill="#0f6cbd"/></svg>
<div class="t" style="left:87.56px;top:318px;font-size:8.5px;color:#1a1a1a;transform:scaleX(0.773);-webkit-text-stroke:0.1px #1a1a1a;">Desktop</div>
<svg class="r" style="left:76px;top:334px;" width="8" height="10" viewBox="0 0 8 10"><path d="M0.5 0.5 H5 L7.5 3 V9.5 H0.5 Z" fill="#fbfbfb" stroke="#8f8f8f" stroke-width="0.8"/><circle cx="3" cy="3.3" r="1" fill="#2f86d8"/><path d="M1.6 6 Q3 4.4 4.4 6 Z" fill="#2f86d8"/><path d="M2 7.5 H6" stroke="#3aa85a" stroke-width="0.9"/></svg>
<div class="t" style="left:87.54px;top:332px;font-size:8.5px;color:#1a1a1a;transform:scaleX(0.817);-webkit-text-stroke:0.1px #1a1a1a;">Documents</div>
<svg class="r" style="left:75px;top:347px;" width="10" height="10" viewBox="0 0 10 10"><rect x="3.4" y="0" width="3.2" height="5" fill="#2f80d6"/><path d="M0.3 4.3 H9.7 L5 9.8 Z" fill="#2f80d6"/></svg>
<div class="t" style="left:87.54px;top:346px;font-size:8.5px;color:#1a1a1a;transform:scaleX(0.811);-webkit-text-stroke:0.1px #1a1a1a;">Downloads</div>
<svg class="r" style="left:76px;top:361px;" width="8" height="10" viewBox="0 0 8 10"><path d="M3 1 V8" stroke="#2a7fd4" stroke-width="1.2"/><ellipse cx="2" cy="8.3" rx="2" ry="1.5" fill="#2a7fd4"/><path d="M3 1 Q5 3 7 3.5 Q6 5 6.5 6.5" stroke="#2a7fd4" stroke-width="1" fill="none"/></svg>
<div class="t" style="left:87.59px;top:360px;font-size:8.5px;color:#1a1a1a;transform:scaleX(0.753);-webkit-text-stroke:0.1px #1a1a1a;">Music</div>
<svg class="r" style="left:75px;top:376px;" width="10" height="8" viewBox="0 0 10 8"><rect x="0.5" y="0.5" width="9" height="7" fill="#f2f4f6" stroke="#8f9aa5" stroke-width="0.8"/><rect x="1.2" y="1.2" width="7.6" height="2.6" fill="#8cc4ec"/><path d="M1.2 6.8 L3.5 4.2 L5.5 5.6 L8.8 3.6 V6.8 Z" fill="#3b6f63"/></svg>
<div class="t" style="left:87.56px;top:374px;font-size:8.5px;color:#1a1a1a;transform:scaleX(0.785);-webkit-text-stroke:0.1px #1a1a1a;">Pictures</div>
<svg class="r" style="left:76px;top:389px;" width="8" height="9" viewBox="0 0 8 9"><rect x="0" y="0" width="8" height="9" fill="#3a3a3a"/><rect x="1.5" y="1" width="5" height="7" fill="#4a90d9"/><rect x="1.5" y="3.5" width="5" height="2" fill="#e08a2a"/></svg>
<div class="t" style="left:87.39px;top:388px;font-size:8.5px;color:#1a1a1a;transform:scaleX(0.779);-webkit-text-stroke:0.1px #1a1a1a;">Videos</div>
<div class="r" style="left:405px;top:109px;width:9px;height:295px;background:#f0f0f0;"></div>
<div class="r" style="left:405px;top:132px;width:9px;height:186px;background:#cdcdcd;"></div>
<svg class="r" style="left:406px;top:112px;" width="7" height="5" viewBox="0 0 7 5"><path d="M1 4 L3.5 1.5 L6 4" stroke="#333" stroke-width="1.1" fill="none"/></svg>
<svg class="r" style="left:406px;top:397px;" width="7" height="5" viewBox="0 0 7 5"><path d="M1 1 L3.5 3.5 L6 1" stroke="#333" stroke-width="1.1" fill="none"/></svg>
<div class="r" style="left:55px;top:400px;width:350px;height:4px;background:#d4d4d4;"></div>
<div class="t" style="left:426.44px;top:112px;font-size:8.5px;color:#3e5273;transform:scaleX(0.801);-webkit-text-stroke:0.1px #3e5273;">Name</div>
<svg class="r" style="left:496px;top:109px;" width="7" height="4" viewBox="0 0 7 4"><path d="M1 3.5 L3.5 1 L6 3.5" stroke="#9aa0a6" stroke-width="0.9" fill="none"/></svg>
<div class="r" style="left:575px;top:110px;width:1px;height:15px;background:#e5e5e5;"></div>
<div class="r" style="left:660px;top:110px;width:1px;height:15px;background:#e5e5e5;"></div>
<div class="r" style="left:730px;top:110px;width:1px;height:15px;background:#e5e5e5;"></div>
<div class="t" style="left:580.54px;top:112px;font-size:8.5px;color:#3e5273;transform:scaleX(0.806);-webkit-text-stroke:0.1px #3e5273;">Date modified</div>
<div class="t" style="left:664.43px;top:112px;font-size:8.5px;color:#3e5273;transform:scaleX(0.794);-webkit-text-stroke:0.1px #3e5273;">Type</div>
<div class="t" style="left:733.61px;top:112px;font-size:8.5px;color:#3e5273;-webkit-text-stroke:0.1px #3e5273;width:12.3px;overflow:hidden;">Size</div>
<svg class="r" style="left:427px;top:128px;" width="10" height="10" viewBox="0 0 10 10"><ellipse cx="5.5" cy="5" rx="4.2" ry="4.9" fill="#1c7fd8"/><path d="M3.8 3 L7 6.5 L5.4 8 V2 L7 3.5 L3.8 7" stroke="#fff" stroke-width="0.8" fill="none"/><rect x="0" y="6" width="4" height="4" fill="#fff"/><path d="M1 9 Q1 7 3 7" stroke="#1c5fb4" stroke-width="0.7" fill="none"/></svg>
<div class="t" style="left:438.45px;top:129px;font-size:8.5px;color:#000;transform:scaleX(0.830);-webkit-text-stroke:0.1px #000;">Bluetooth device</div>
<div class="t" style="left:579.83px;top:129px;font-size:8.5px;color:#6d6d6d;transform:scaleX(0.790);-webkit-text-stroke:0.1px #6d6d6d;">8/28/2019 8:08 PM</div>
<div class="t" style="left:663.72px;top:129px;font-size:8.5px;color:#6d6d6d;transform:scaleX(0.834);-webkit-text-stroke:0.1px #6d6d6d;">Shortcut</div>
<svg class="r" style="left:428px;top:141px;" width="8" height="10" viewBox="0 0 8 10"><path d="M0.5 0.5 H7.5 V9.5 H0.5 Z" fill="#ffe28f" stroke="#e6b94a" stroke-width="0.8"/><path d="M4 0.5 V9" stroke="#8a8a8a" stroke-width="1.2" stroke-dasharray="1 1"/></svg>
<div class="t" style="left:438.69px;top:141px;font-size:8.5px;color:#000;transform:scaleX(0.814);-webkit-text-stroke:0.1px #000;">Compressed (zipped) folder</div>
<div class="t" style="left:579.86px;top:141px;font-size:8.5px;color:#6d6d6d;transform:scaleX(0.801);-webkit-text-stroke:0.1px #6d6d6d;">3/19/2019 12:49 AM</div>
<div class="t" style="left:663.69px;top:141px;font-size:8.5px;color:#6d6d6d;transform:scaleX(0.804);-webkit-text-stroke:0.1px #6d6d6d;">Compressed (zipp...</div>
<svg class="r" style="left:427px;top:154px;" width="10" height="8" viewBox="0 0 10 8"><rect x="0" y="0" width="10" height="7" fill="#1a8ce6"/><rect x="0" y="6.5" width="10" height="1.3" fill="#0f5ea8"/></svg>
<div class="t" style="left:438.46px;top:154px;font-size:8.5px;color:#000;transform:scaleX(0.815);-webkit-text-stroke:0.1px #000;">Desktop (create shortcut)</div>
<div class="t" style="left:579.86px;top:154px;font-size:8.5px;color:#6d6d6d;transform:scaleX(0.801);-webkit-text-stroke:0.1px #6d6d6d;">3/19/2019 12:49 AM</div>
<div class="t" style="left:663.47px;top:154px;font-size:8.5px;color:#6d6d6d;transform:scaleX(0.813);-webkit-text-stroke:0.1px #6d6d6d;">Desktop Shortcut</div>
<svg class="r" style="left:428px;top:166px;" width="8" height="10" viewBox="0 0 8 10"><path d="M0.5 0.5 H5 L7.5 3 V9.5 H0.5 Z" fill="#fbfbfb" stroke="#9a9a9a" stroke-width="0.8"/><path d="M2 4 H5.5 M2 6 H6 M2 8 H6" stroke="#4a8fd6" stroke-width="0.8"/><rect x="0" y="8.5" width="8" height="1.5" fill="#2a7fd4"/></svg>
<div class="t" style="left:438.45px;top:166px;font-size:8.5px;color:#000;transform:scaleX(0.828);-webkit-text-stroke:0.1px #000;">Documents</div>
<div class="t" style="left:579.77px;top:166px;font-size:8.5px;color:#6d6d6d;transform:scaleX(0.791);-webkit-text-stroke:0.1px #6d6d6d;">7/21/2018 8:55 PM</div>
<div class="t" style="left:663.48px;top:166px;font-size:8.5px;color:#6d6d6d;transform:scaleX(0.813);-webkit-text-stroke:0.1px #6d6d6d;">MyDocs Drop Targ...</div>
<svg class="r" style="left:427px;top:178px;" width="10" height="10" viewBox="0 0 10 10"><rect x="2" y="0.5" width="6" height="3" fill="#f4f4f4" stroke="#999" stroke-width="0.7"/><rect x="0.5" y="3.5" width="9" height="6" fill="#e6e9ec" stroke="#808890" stroke-width="0.8"/><rect x="1.5" y="5" width="3" height="3" fill="#4a8fd6"/><path d="M5.5 5 H8.5 M5.5 7 H8.5" stroke="#808890" stroke-width="0.8"/><rect x="0" y="5.5" width="4.5" height="4.5" fill="#fff"/><path d="M1 9.2 Q1 7.2 3.2 7.2 M2.4 6.4 L3.4 7.2 L2.4 8.1" stroke="#1c5fb4" stroke-width="0.8" fill="none"/></svg>
<div class="t" style="left:438.48px;top:178px;font-size:8.5px;color:#000;transform:scaleX(0.788);-webkit-text-stroke:0.1px #000;">Fax recipient</div>
<div class="t" style="left:579.83px;top:178px;font-size:8.5px;color:#6d6d6d;transform:scaleX(0.790);-webkit-text-stroke:0.1px #6d6d6d;">8/28/2019 8:06 PM</div>
<div class="t" style="left:663.72px;top:178px;font-size:8.5px;color:#6d6d6d;transform:scaleX(0.834);-webkit-text-stroke:0.1px #6d6d6d;">Shortcut</div>
<svg class="r" style="left:427px;top:192px;" width="10" height="7" viewBox="0 0 10 7"><rect x="0.5" y="0.5" width="9" height="6" fill="#f8f8f8" stroke="#a8a8a8" stroke-width="0.8"/><path d="M1 1 L5 4 L9 1" stroke="#b8b8b8" stroke-width="0.6" fill="none"/></svg>
<div class="t" style="left:438.45px;top:190px;font-size:8.5px;color:#000;transform:scaleX(0.828);-webkit-text-stroke:0.1px #000;">Mail recipient</div>
<div class="t" style="left:579.86px;top:190px;font-size:8.5px;color:#6d6d6d;transform:scaleX(0.801);-webkit-text-stroke:0.1px #6d6d6d;">3/19/2019 12:49 AM</div>
<div class="t" style="left:663.47px;top:190px;font-size:8.5px;color:#6d6d6d;transform:scaleX(0.803);-webkit-text-stroke:0.1px #6d6d6d;">Mail Service</div>
<svg class="r" style="left:427px;top:202px;" width="10" height="10" viewBox="0 0 10 10"><rect x="0" y="0" width="10" height="10" rx="1.5" fill="#1a79d6"/><circle cx="5" cy="5" r="3.6" fill="#fff"/><path d="M1.8 5 L3.5 3.6 V4.4 H6.5 V3.6 L8.2 5 L6.5 6.4 V5.6 H3.5 V6.4 Z" fill="#1a79d6"/><rect x="0" y="5.5" width="4.5" height="4.5" fill="#fff"/><path d="M1 9.2 Q1 7.2 3.2 7.2 M2.4 6.4 L3.4 7.2 L2.4 8.1" stroke="#1c5fb4" stroke-width="0.8" fill="none"/></svg>
<div class="t" style="left:438.89px;top:203px;font-size:8.5px;color:#000;transform:scaleX(0.782);-webkit-text-stroke:0.1px #000;">TeamViewer</div>
<div class="t" style="left:579.60px;top:203px;font-size:8.5px;color:#6d6d6d;transform:scaleX(0.788);-webkit-text-stroke:0.1px #6d6d6d;">12/10/2018 3:41 PM</div>
<div class="t" style="left:663.72px;top:203px;font-size:8.5px;color:#6d6d6d;transform:scaleX(0.834);-webkit-text-stroke:0.1px #6d6d6d;">Shortcut</div>
<svg class="r" style="left:427px;top:215px;" width="10" height="10" viewBox="0 0 10 10"><circle cx="5" cy="5" r="4.6" fill="#e4e7ea" stroke="#a9b0b8" stroke-width="0.7"/><circle cx="5" cy="5" r="1.3" fill="#fff" stroke="#9aa" stroke-width="0.5"/><rect x="0" y="6" width="4" height="4" fill="#fff"/><path d="M1 9 Q1 7 3 7" stroke="#1c5fb4" stroke-width="0.7" fill="none"/><rect x="0" y="5.5" width="4.5" height="4.5" fill="#fff"/><path d="M1 9.2 Q1 7.2 3.2 7.2 M2.4 6.4 L3.4 7.2 L2.4 8.1" stroke="#1c5fb4" stroke-width="0.8" fill="none"/></svg>
<div class="t" style="left:438.69px;top:215px;font-size:8.5px;color:#000;transform:scaleX(0.812);-webkit-text-stroke:0.1px #000;">CD Drive - Shortcut</div>
<div class="t" style="left:579.60px;top:215px;font-size:8.5px;color:#6d6d6d;transform:scaleX(0.784);-webkit-text-stroke:0.1px #6d6d6d;">1/22/2020 2:59 PM</div>
<div class="t" style="left:663.72px;top:215px;font-size:8.5px;color:#6d6d6d;transform:scaleX(0.834);-webkit-text-stroke:0.1px #6d6d6d;">Shortcut</div>
<div class="r" style="left:417px;top:395px;width:328px;height:9px;background:#f0f0f0;"></div>
<div class="r" style="left:427px;top:395px;width:276px;height:9px;background:#cdcdcd;"></div>
<svg class="r" style="left:419px;top:397px;" width="5" height="6" viewBox="0 0 5 6"><path d="M3.5 0.8 L1.2 3 L3.5 5.2" stroke="#333" stroke-width="1.1" fill="none"/></svg>
<svg class="r" style="left:738px;top:397px;" width="5" height="6" viewBox="0 0 5 6"><path d="M1.5 0.8 L3.8 3 L1.5 5.2" stroke="#333" stroke-width="1.1" fill="none"/></svg>
<div class="t" style="left:64.23px;top:406px;font-size:8.5px;color:#1e1e1e;transform:scaleX(0.822);-webkit-text-stroke:0.1px #1e1e1e;">8 items</div>
<div class="r" style="left:92px;top:406px;width:1px;height:10px;background:#f7f7f7;"></div>
<div class="r" style="left:717px;top:404px;width:13px;height:14px;background:#cce8ff;border:1px solid #3d9be9;box-sizing:border-box"></div>
<svg class="r" style="left:719px;top:406px;" width="9" height="10" viewBox="0 0 9 10"><rect x="0.5" y="1" width="3" height="2" fill="#f0f0f0" stroke="#999" stroke-width="0.5"/><rect x="0.5" y="4" width="3" height="2" fill="#f0f0f0" stroke="#999" stroke-width="0.5"/><rect x="0.5" y="7" width="3" height="2" fill="#f4c0b0" stroke="#999" stroke-width="0.5"/><path d="M4.5 2 H9 M4.5 5 H9 M4.5 8 H9" stroke="#555" stroke-width="1"/></svg>
<svg class="r" style="left:732px;top:407px;" width="9" height="7" viewBox="0 0 9 7"><rect x="0.5" y="0.5" width="8" height="6" fill="#e6eef6" stroke="#888" stroke-width="0.8"/><path d="M1 5.5 L3.5 3.5 L5.5 5 L8 3 V6 H1 Z" fill="#2f6a48"/><rect x="1" y="1" width="7" height="2" fill="#5ab0ec"/></svg>
<div class="r" style="left:0px;top:427px;width:750px;height:23px;background:#111111;"></div>
<svg class="r" style="left:9px;top:432px;" width="11" height="11" viewBox="0 0 11 11"><path d="M0 1.6 L4.6 1 V5.2 H0 Z M5.4 0.9 L11 0 V5.2 H5.4 Z M0 5.8 H4.6 V10 L0 9.4 Z M5.4 5.8 H11 V11 L5.4 10.1 Z" fill="#fff"/></svg>
<div class="r" style="left:28px;top:427px;width:202px;height:23px;background:#f0f0f0;"></div>
<svg class="r" style="left:35px;top:433px;" width="11" height="11" viewBox="0 0 11 11"><circle cx="6.8" cy="4.2" r="3.5" fill="none" stroke="#222" stroke-width="1"/><path d="M4.3 6.7 L0.7 10.3" stroke="#222" stroke-width="1.1"/></svg>
<div class="t" style="left:51.27px;top:433px;font-size:9.5px;color:#333;transform:scaleX(0.890);-webkit-text-stroke:0.1px #333;">Type here to search</div>
<svg class="r" style="left:239px;top:433px;" width="10" height="10" viewBox="0 0 10 10"><circle cx="5" cy="5" r="4" fill="none" stroke="#fff" stroke-width="1.3"/></svg>
<svg class="r" style="left:266px;top:433px;" width="12" height="11" viewBox="0 0 12 11"><rect x="2.5" y="2" width="7" height="6.5" fill="none" stroke="#fff" stroke-width="1.1"/><path d="M2 2 H10 M2 8.5 H10" stroke="#fff" stroke-width="1.6"/><path d="M0.6 0 V11 M11.4 0 V11" stroke="#fff" stroke-width="1" stroke-dasharray="1.5 1"/></svg>
<div class="r" style="left:288px;top:427px;width:28px;height:23px;background:#333333;"></div>
<div class="r" style="left:288px;top:448px;width:28px;height:2px;background:#8ccaf7;"></div>
<svg class="r" style="left:294px;top:432px;" width="15" height="12" viewBox="0 0 15 12"><path d="M0.5 0.5 H5.5 L6.5 1.5 H14 V11.5 H0.5 Z" fill="#f7cd55"/><rect x="0.5" y="0.5" width="6" height="1.6" fill="#e0a030"/><rect x="0.5" y="3" width="13.5" height="8.5" fill="#ffd95e"/><path d="M4 11.8 V6.5 H10.5 V11.8" stroke="#1a7ad8" stroke-width="1.8" fill="none"/></svg>
<svg class="r" style="left:324px;top:432px;" width="13" height="13" viewBox="0 0 13 13"><path d="M1 5.5 Q2.5 0.8 7 0.8 Q12.2 0.8 12.2 6.8 V7.6 H4.2 Q4.4 10.2 7.6 10.2 Q9.6 10.2 11.6 9.2 V11.6 Q9.6 12.6 7.2 12.6 Q1.4 12.6 1.4 7.2 Q1.4 3.2 5.4 2.6 Q3 3.4 2.6 5.4 Z M4.3 5.6 H9.2 Q9.1 3.6 6.9 3.6 Q4.7 3.6 4.3 5.6 Z" fill="#1784ec" fill-rule="evenodd"/></svg>
<svg class="r" style="left:351px;top:431px;" width="17" height="14" viewBox="0 0 17 14"><path d="M14.5 4 A6.2 6.2 0 1 0 14.5 10.5" stroke="#e03a2c" stroke-width="3.6" fill="none"/><path d="M5 4.5 L9.5 0.8" stroke="#3a7bd5" stroke-width="1.3"/><path d="M1 11.5 Q2 7 5.5 5.5 L7.5 7.8 Q6 11.5 2.5 13 Z" fill="#f2d6a8"/></svg>
<svg class="r" style="left:380px;top:431px;" width="15" height="14" viewBox="0 0 15 14"><path d="M11.8 7.8 H5.2 Q5.5 10.4 8.2 10.4 Q10.2 10.4 11.6 9.5 V11.7 Q10 12.7 7.9 12.7 Q2.6 12.7 2.6 7.3 Q2.6 2 7.7 2 Q12.6 2 12.2 7.8 Z M5.3 5.9 H9.6 Q9.5 4 7.5 4 Q5.6 4 5.3 5.9 Z" fill="#3ab7f0" fill-rule="evenodd"/><path d="M3 13 Q0 12 3 6 Q6 1 12 0.6 Q15 0.6 13.5 4" stroke="#f0c419" stroke-width="1.1" fill="none"/></svg>
<svg class="r" style="left:409px;top:431px;" width="14" height="14" viewBox="0 0 14 14"><path d="M4.5 4 Q4.5 1 7 1 Q9.5 1 9.5 4" stroke="#fff" stroke-width="1" fill="none"/><rect x="1" y="4" width="12" height="10" fill="#fff"/><rect x="4" y="6" width="2.8" height="2.8" fill="#f25022"/><rect x="7.2" y="6" width="2.8" height="2.8" fill="#7fba00"/><rect x="4" y="9.2" width="2.8" height="2.8" fill="#00a4ef"/><rect x="7.2" y="9.2" width="2.8" height="2.8" fill="#ffb900"/></svg>
<svg class="r" style="left:438px;top:432px;" width="15" height="12" viewBox="0 0 15 12"><rect x="4" y="0" width="11" height="3" fill="#41a5ee"/><rect x="4" y="3" width="11" height="3" fill="#2b7cd3"/><rect x="4" y="6" width="11" height="3" fill="#185abd"/><rect x="4" y="9" width="11" height="3" fill="#103f91"/><rect x="0" y="2.5" width="8" height="7.5" fill="#185abd"/><path d="M1.3 4 L2.7 8.6 L4 5.5 L5.3 8.6 L6.7 4" stroke="#fff" stroke-width="0.9" fill="none"/></svg>
<svg class="r" style="left:467px;top:431px;" width="14" height="14" viewBox="0 0 14 14"><circle cx="7" cy="7" r="6.5" fill="#fff"/><path d="M3 7.5 Q3.5 3.8 8 3.6" stroke="#1d3f78" stroke-width="1.8" fill="none"/><path d="M7.5 1.4 L11 3.7 L7.5 6 Z" fill="#1d3f78"/><path d="M11 6.5 Q10.5 10.2 6 10.4" stroke="#2a9ae6" stroke-width="1.8" fill="none"/><path d="M6.5 8 L3 10.3 L6.5 12.6 Z" fill="#2a9ae6"/></svg>
<svg class="r" style="left:642px;top:435px;" width="9" height="6" viewBox="0 0 9 6"><path d="M0.7 5 L4.5 1.2 L8.3 5" stroke="#fff" stroke-width="1" fill="none"/></svg>
<svg class="r" style="left:654px;top:434px;" width="11" height="9" viewBox="0 0 11 9"><path d="M0.5 3 H2.5 L5.5 0.5 V8.5 L2.5 6 H0.5 Z" fill="none" stroke="#fff" stroke-width="0.9"/><path d="M7 3 Q8 4.5 7 6 M8.8 1.5 Q10.8 4.5 8.8 7.5" stroke="#bbb" stroke-width="0.8" fill="none"/></svg>
<svg class="r" style="left:669px;top:434px;" width="11" height="10" viewBox="0 0 11 10"><rect x="2.5" y="2.5" width="8" height="5.5" fill="none" stroke="#fff" stroke-width="0.9"/><path d="M6.5 8 V9.5 M4 9.5 H9" stroke="#fff" stroke-width="0.9"/><path d="M0 0.5 H3 M1.5 0 V3" stroke="#fff" stroke-width="0.8"/></svg>
<div class="t" style="left:687.90px;top:428px;font-size:8.5px;color:#fff;transform:scaleX(0.783);-webkit-text-stroke:0.1px #fff;">3:04 PM</div>
<div class="t" style="left:685.68px;top:438px;font-size:8.5px;color:#fff;transform:scaleX(0.781);-webkit-text-stroke:0.1px #fff;">1/22/2020</div>
<svg class="r" style="left:725px;top:434px;" width="11" height="9" viewBox="0 0 11 9"><path d="M0.5 0.5 H10.5 V6.5 H6 L4.5 8.5 L3.5 6.5 H0.5 Z" fill="none" stroke="#fff" stroke-width="0.9"/></svg>
<div class="r" style="left:747px;top:427px;width:1px;height:23px;background:#3a3a3a;"></div>
<div class="r" style="left:55px;top:20px;width:1px;height:398px;background:#6f9fd2;"></div>
</body></html>
